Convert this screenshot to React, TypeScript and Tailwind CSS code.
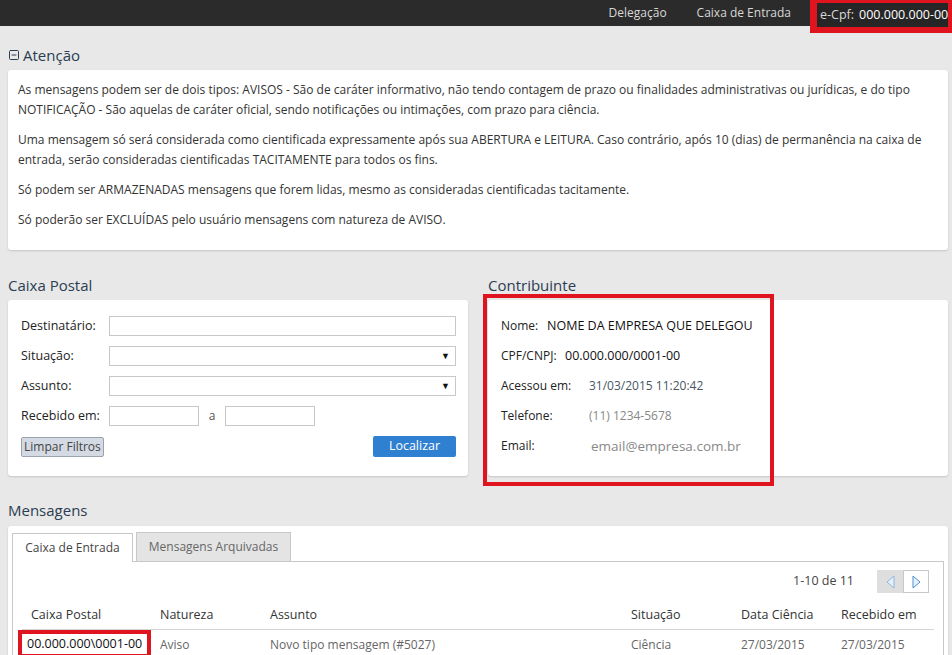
import { MinusSquare } from 'lucide-react';

const font = { fontFamily: '"Open Sans", "Liberation Sans", sans-serif' };

function Heading({ children }: { children: React.ReactNode }) {
  return <h2 className="text-[15px] leading-[20px] text-[#2b3d52]">{children}</h2>;
}

function FieldRow({ label, children }: { label: string; children: React.ReactNode }) {
  return (
    <div className="flex items-center h-[20px]">
      <span className="w-[88px] text-[12.5px] text-[#222]">{label}</span>
      {children}
    </div>
  );
}

function Select() {
  return (
    <div className="flex-1 h-[20px] border border-[#c8c8c8] bg-white flex items-center justify-end pr-[5px]">
      <span className="text-[9px] text-[#111]">▼</span>
    </div>
  );
}

function InfoRow({ label, value, w, valueClass }: { label: string; value: string; w: string; valueClass: string }) {
  return (
    <div className="flex items-center h-[20px]">
      <span className={`${w} text-[12px] text-[#222]`}>{label}</span>
      <span className={valueClass}>{value}</span>
    </div>
  );
}

export default function App() {
  return (
    <div className="min-h-screen bg-[#e8e8e8] text-[#333]" style={font}>
      {/* top bar */}
      <div className="h-[26px] bg-[#2b2b2b] flex items-start justify-end">
        <span className="h-[26px] flex items-center text-[12px] text-[#d8d8d8] mr-[30px]">Delegação</span>
        <span className="h-[26px] flex items-center text-[12px] text-[#d8d8d8] mr-[19px]">Caixa de Entrada</span>
        <div className="relative z-10 h-[33px] w-[142px] bg-[#e0141e] pl-[7px] pr-[4px] pt-[3px] pb-[6px]">
          <div className="h-full bg-[#262626] flex items-center pl-[3px] text-[12.5px] whitespace-nowrap">
            <span className="text-[#d8d8d8]">e-Cpf:</span>
            <span className="text-white ml-[5px]">000.000.000-00</span>
          </div>
        </div>
      </div>

      <div className="px-[8px] pr-[4px]">
        {/* Atenção */}
        <div className="pt-[19px] pb-[5px] flex items-center gap-[3px]">
          <MinusSquare className="w-[12px] h-[12px] text-[#2b3d52]" strokeWidth={2} />
          <Heading>Atenção</Heading>
        </div>
        <div className="bg-white rounded-[3px] shadow-[0_1px_2px_rgba(0,0,0,0.15)] pl-[10px] pr-[10px] pt-[10px] pb-[20px] text-[12px] leading-[20px] text-[#333]">
          <p className="mb-[10px]">
            As mensagens podem ser de dois tipos: AVISOS - São de caráter informativo, não tendo contagem de prazo ou finalidades administrativas ou jurídicas, e do tipo NOTIFICAÇÃO - São aquelas de caráter oficial, sendo notificações ou intimações, com prazo para ciência.
          </p>
          <p className="mb-[10px]">
            Uma mensagem só será considerada como cientificada expressamente após sua ABERTURA e LEITURA. Caso contrário, após 10 (dias) de permanência na caixa de entrada, serão consideradas cientificadas TACITAMENTE para todos os fins.
          </p>
          <p className="mb-[10px]">Só podem ser ARMAZENADAS mensagens que forem lidas, mesmo as consideradas cientificadas tacitamente.</p>
          <p>Só poderão ser EXCLUÍDAS pelo usuário mensagens com natureza de AVISO.</p>
        </div>

        {/* Caixa Postal + Contribuinte */}
        <div className="grid grid-cols-2 gap-[20px] mt-[25px]">
          <div>
            <div className="pb-[5px]"><Heading>Caixa Postal</Heading></div>
            <div className="bg-white rounded-[3px] shadow-[0_1px_2px_rgba(0,0,0,0.15)] h-[176px] pl-[13px] pr-[12px] pt-[16px] flex flex-col gap-[10px]">
              <FieldRow label="Destinatário:">
                <div className="flex-1 h-[20px] border border-[#c8c8c8] bg-white" />
              </FieldRow>
              <FieldRow label="Situação:"><Select /></FieldRow>
              <FieldRow label="Assunto:"><Select /></FieldRow>
              <FieldRow label="Recebido em:">
                <div className="w-[90px] h-[20px] border border-[#c8c8c8] bg-white" />
                <span className="w-[26px] text-center text-[12px] text-[#555]">a</span>
                <div className="w-[90px] h-[20px] border border-[#c8c8c8] bg-white" />
              </FieldRow>
              <div className="flex items-center justify-between">
                <button className="h-[20px] px-[2px] rounded-[2px] border border-[#9aa3ad] bg-[#d3dae3] text-[12px] leading-[18px] text-[#444]">Limpar Filtros</button>
                <button className="h-[21px] w-[83px] rounded-[2px] bg-[#2f80d1] text-[12.5px] text-white">Localizar</button>
              </div>
            </div>
          </div>

          <div>
            <div className="pb-[5px]"><Heading>Contribuinte</Heading></div>
            <div className="relative bg-white rounded-[3px] shadow-[0_1px_2px_rgba(0,0,0,0.15)] h-[176px] pl-[13px] pt-[16px] flex flex-col gap-[10px]">
              <div className="flex items-center h-[20px]">
                <span className="w-[46px] text-[12px] text-[#222]">Nome:</span>
                <span className="text-[12.5px] text-[#111]">NOME DA EMPRESA QUE DELEGOU</span>
              </div>
              <div className="flex items-center h-[20px]">
                <span className="w-[64px] text-[12px] text-[#222]">CPF/CNPJ:</span>
                <span className="text-[12.5px] text-[#111]">00.000.000/0001-00</span>
              </div>
              <InfoRow label="Acessou em:" value="31/03/2015 11:20:42" w="w-[88px]" valueClass="text-[12px] text-[#4a5563]" />
              <InfoRow label="Telefone:" value="(11) 1234-5678" w="w-[88px]" valueClass="text-[12px] text-[#888]" />
              <InfoRow label="Email:" value="email@empresa.com.br" w="w-[90px]" valueClass="text-[13.5px] text-[#888]" />
              {/* red highlight */}
              <div className="absolute left-[-5px] top-[-6px] w-[291px] h-[192px] border-[4px] border-[#e0141e] pointer-events-none" />
            </div>
          </div>
        </div>

        {/* Mensagens */}
        <div className="mt-[24px] pb-[6px]"><Heading>Mensagens</Heading></div>
        <div className="bg-white rounded-[3px] shadow-[0_1px_2px_rgba(0,0,0,0.15)] pt-[6px] pl-[4px] pr-[4px] h-[140px]">
          <div className="flex items-end h-[29px]">
            <div className="h-[29px] w-[121px] border border-[#c8c8c8] border-b-0 bg-white flex items-center justify-center text-[12px] text-[#444] relative z-10 -mb-px">Caixa de Entrada</div>
            <div className="ml-[3px] h-[29px] w-[155px] border border-[#c8c8c8] border-b-0 bg-[#e4e4e4] flex items-center justify-center text-[12px] text-[#666]">Mensagens Arquivadas</div>
          </div>
          <div className="border border-[#c8c8c8] border-b-0 h-[110px] pl-[9px] pr-[9px]">
            <div className="flex items-center justify-end h-[37px] pt-[2px]">
              <span className="text-[12.5px] text-[#444] mr-[23px]">1-10 de 11</span>
              <div className="flex h-[23px] mr-[5px]">
                <div className="w-[26px] h-[23px] bg-[#dedede] flex items-center justify-center">
                  <svg width="9" height="14" viewBox="0 0 9 14"><path d="M8 1 L1 7 L8 13 Z" fill="#e6f0fa" stroke="#8fb6de" strokeWidth="1" /></svg>
                </div>
                <div className="w-[26px] h-[23px] bg-white border border-[#c8c8c8] flex items-center justify-center">
                  <svg width="9" height="14" viewBox="0 0 9 14"><path d="M1 1 L8 7 L1 13 Z" fill="#e6f0fa" stroke="#4f8fd0" strokeWidth="1" /></svg>
                </div>
              </div>
            </div>
            <div className="grid grid-cols-[129px_110px_361px_110px_100px_1fr] text-[12.5px] mt-[3px]">
              <div className="pl-[9px] h-[28px] flex items-center border-b border-[#d5d5d5] text-[#333]">Caixa Postal</div>
              <div className="pl-[9px] h-[28px] flex items-center border-b border-[#d5d5d5] text-[#333]">Natureza</div>
              <div className="pl-[9px] h-[28px] flex items-center border-b border-[#d5d5d5] text-[#333]">Assunto</div>
              <div className="pl-[9px] h-[28px] flex items-center border-b border-[#d5d5d5] text-[#333]">Situação</div>
              <div className="pl-[9px] h-[28px] flex items-center border-b border-[#d5d5d5] text-[#333]">Data Ciência</div>
              <div className="pl-[9px] h-[28px] flex items-center border-b border-[#d5d5d5] text-[#333]">Recebido em</div>
              <div className="relative pl-[5px] h-[29px] flex items-center text-[12.5px] text-[#111]">
                00.000.000\0001-00
                <div className="absolute left-[-4px] top-0 w-[133px] h-[28px] border-[4px] border-[#e0141e] pointer-events-none" />
              </div>
              <div className="pl-[9px] h-[29px] flex items-center text-[12px] text-[#666]">Aviso</div>
              <div className="pl-[9px] h-[29px] flex items-center text-[12px] text-[#666]">Novo tipo mensagem (#5027)</div>
              <div className="pl-[9px] h-[29px] flex items-center text-[12px] text-[#666]">Ciência</div>
              <div className="pl-[9px] h-[29px] flex items-center text-[12px] text-[#666]">27/03/2015</div>
              <div className="pl-[9px] h-[29px] flex items-center text-[12px] text-[#666]">27/03/2015</div>
            </div>
          </div>
        </div>
      </div>
    </div>
  );
}
